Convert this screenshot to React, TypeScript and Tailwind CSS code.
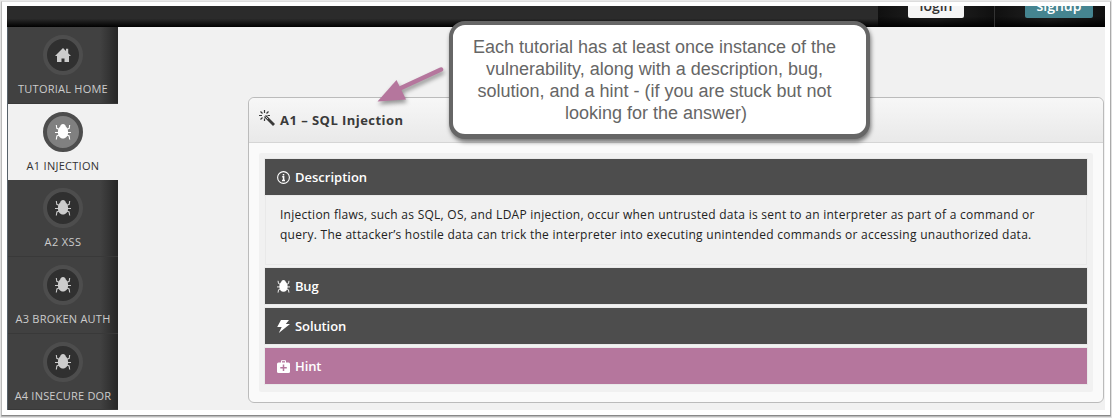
import React from "react";

type IconProps = { className?: string };

function BugIcon({ className }: IconProps) {
  return (
    <svg viewBox="0 0 16 16" className={className} fill="none" stroke="currentColor">
      <path d="M8 0C6.500 0 5.400 1 5.200 2.400 3.800 3.600 2.900 5.700 2.900 8.200c0 3.800 2.200 6.300 5.100 6.300s5.100-2.500 5.100-6.300c0-2.500-.9-4.600-2.300-5.800C10.600 1 9.500 0 8 0z" fill="currentColor" stroke="none" />
      <path strokeWidth="1.100" d="M4.500 5.500 1.800 4.300 1.300 1M11.500 5.500l2.700-1.200.5-3.300M4 8.500H0M12 8.500h4M4.500 10.800 1.900 12 1.300 15.500M11.500 10.800l2.600 1.200.6 3.500" />
    </svg>
  );
}

function HomeIcon({ className }: IconProps) {
  return (
    <svg viewBox="0 0 16 16" className={className} fill="currentColor">
      <path d="M8 1 0 9h2v6h4.500v-3.500h3V15H14V9h2l-2.800-2.800V1.700H11v2.300z" />
    </svg>
  );
}

function WandIcon({ className }: IconProps) {
  return (
    <svg viewBox="0 0 16 16" className={className} fill="none" stroke="currentColor">
      <path strokeWidth="2.800" d="M6 6 15 15" />
      <path strokeWidth="1.200" d="M5.500 0v3M5.500 8.500v2.500M0 5.500h3M8.500 5.500H11M1.500 1.500l2 2M9.500 1.500l-2 2M3.500 7.500l-2 2" />
      <path stroke="#eee" strokeWidth=".8" d="m6.500 6.500 2.500 2.500" />
    </svg>
  );
}

function InfoIcon({ className }: IconProps) {
  return (
    <svg viewBox="0 0 13 13" className={className} fill="none" stroke="currentColor">
      <circle cx="6.500" cy="6.500" r="5.900" strokeWidth="1.100" />
      <path strokeWidth="1.500" d="M6.500 3v1.500M5.200 5.700h1.400v3.800M5 9.500h3" />
    </svg>
  );
}

function BoltIcon({ className }: IconProps) {
  return (
    <svg viewBox="0 0 13 13" className={className} fill="currentColor">
      <path d="M4 0h8L8.800 3.900H13L1.800 13l2.900-6H.2z" />
    </svg>
  );
}

function KitIcon({ className }: IconProps) {
  return (
    <svg viewBox="0 0 13 13" className={className}>
      <path d="M4.500 3V.7h4V3" fill="none" stroke="currentColor" />
      <rect y="2.500" width="13" height="10.500" rx="1.500" fill="currentColor" />
      <path d="M6.500 4.500v6.500M3.300 7.700h6.500" stroke="#b5769d" strokeWidth="1.500" />
    </svg>
  );
}

const tabs = [
  { label: "TUTORIAL HOME", box: "h-[77px]", text: "tracking-[0.24px]", Icon: HomeIcon },
  { label: "A1 INJECTION", box: "h-[76px]", text: "tracking-[0.28px]", Icon: BugIcon, active: true },
  { label: "A2 XSS", box: "h-[77px]", text: "tracking-[0.4px]", Icon: BugIcon },
  { label: "A3 BROKEN AUTH", box: "h-[77px]", text: "tracking-[0.24px]", Icon: BugIcon },
  { label: "A4 INSECURE DOR", box: "h-[76px]", text: "tracking-[0.2px]", Icon: BugIcon },
];

function Sidebar() {
  return (
    <nav className="w-[111px] shrink-0 border-l border-[#56616a]">
      {tabs.map(({ label, box, text, Icon, active }) => (
        <div
          key={label}
          className={`${box} flex flex-col items-center pt-2 ${
            active
              ? "bg-[#f1f1f1] text-[#333]"
              : "border-b border-[#393939] bg-[linear-gradient(90deg,#414141_84%,#272727)] text-[#ccc]"
          }`}
        >
          <span
            className={`flex size-10 shrink-0 items-center justify-center rounded-full border-4 ${
              active ? "border-[#4d4d4d] bg-[#808080] text-white" : "border-[#4d4d4d] bg-[#303030]"
            }`}
          >
            <Icon className="size-4" />
          </span>
          <span className={`mt-[6px] text-[11px] leading-4 font-medium whitespace-nowrap ${text}`}>{label}</span>
        </div>
      ))}
    </nav>
  );
}

function TopBar() {
  return (
    <header className="flex h-[21px] shrink-0 justify-end overflow-hidden bg-[linear-gradient(#2b2b2b_60%,#000)]">
      <div className="flex w-[117px] border-r border-[#333] bg-[linear-gradient(90deg,#101010,#222_50%,#101010)]">
        <div className="flex size-full bg-[linear-gradient(transparent_50%,#000)] pl-[30px]">
          <div className="flex h-3 w-14 items-end justify-center rounded-b-xs bg-[#f5f5f5] text-[14px] leading-4 font-semibold text-[#333]">
            <span className="h-5">login</span>
          </div>
        </div>
      </div>
      <div className="flex w-[110px] bg-[linear-gradient(90deg,#101010,#222_50%,#101010)]">
        <div className="flex size-full bg-[linear-gradient(transparent_50%,#000)] pl-[30px]">
          <div className="flex h-3 w-[68px] items-end justify-center rounded-b-xs bg-[#458490] text-[14px] leading-4 font-semibold text-white">
            <span className="h-5">signup</span>
          </div>
        </div>
      </div>
    </header>
  );
}

type BarProps = { label: string; color: string; text: string; Icon: React.ComponentType<IconProps> };

function Bar({ label, color, text, Icon }: BarProps) {
  return (
    <div className={`flex h-9 items-center pl-3 text-white shadow-[0_0_0_1px_#e9e9e9] ${color}`}>
      <Icon className="mr-[5px] size-[13px]" />
      <span className={`text-[13px] leading-5 font-semibold ${text}`}>{label}</span>
    </div>
  );
}

function Panel() {
  return (
    <section className="h-[306px] w-[856px] rounded-md border border-[#bbb] bg-[#fafafa]">
      <div className="flex h-[45px] items-center rounded-t-md border-b border-[#d5d5d5] bg-linear-to-b from-[#f7f7f7] to-[#e9e9e9] pl-[10px] text-[#3a3a3a]">
        <WandIcon className="mb-[5px] size-4" />
        <h1 className="ml-[5px] text-[13px] leading-5 font-bold tracking-[0.46px]">A1 – SQL Injection</h1>
      </div>
      <div className="mx-[10px] mt-[10px] flex h-[239px] flex-col rounded-xs bg-[#f1f1f1] px-[6px] pt-[6px]">
        <Bar label="Description" color="bg-[#4d4d4d]" text="tracking-[0px]" Icon={InfoIcon} />
        <div className="mb-[3px] h-[70px] border border-[#e9e9e9] pt-[9px] pl-[14px] text-[12px] leading-5 whitespace-nowrap text-[#222]">
          <p className="tracking-[0.265px]">Injection flaws, such as SQL, OS, and LDAP injection, occur when untrusted data is sent to an interpreter as part of a command or</p>
          <p className="tracking-[0.27px]">query. The attacker’s hostile data can trick the interpreter into executing unintended commands or accessing unauthorized data.</p>
        </div>
        <div className="flex flex-col gap-1">
          <Bar label="Bug" color="bg-[#4d4d4d]" text="tracking-[-0.2px]" Icon={BugIcon} />
          <Bar label="Solution" color="bg-[#4d4d4d]" text="tracking-[-0.1px]" Icon={BoltIcon} />
          <Bar label="Hint" color="bg-[#b5769d]" text="tracking-[-0.1px]" Icon={KitIcon} />
        </div>
      </div>
    </section>
  );
}

function Callout() {
  return (
    <>
      <svg viewBox="0 0 80 50" className="absolute top-[62px] left-[370px] h-[50px] w-20 overflow-visible drop-shadow-[1px_3px_2px_rgba(0,0,0,0.4)]">
        <path d="M71 7.500 31 26" stroke="#b5769d" strokeWidth="4.500" strokeLinecap="round" />
        <path d="M7.500 39.500 26.500 18 36 37.500z" fill="#b5769d" />
      </svg>
      <div className="absolute top-[21px] left-[449px] h-[118px] w-[421px] rounded-[16px] border-4 border-b-[5px] border-[#666] bg-white pt-[11px] pr-[10px] text-center font-['Liberation_Sans',sans-serif] text-[18px] leading-[22px] whitespace-nowrap text-[#666] shadow-[1px_3px_4px_rgba(0,0,0,0.5)]">
        <p>Each tutorial has at least once instance of the</p>
        <p>vulnerability, along with a description, bug,</p>
        <p>solution, and a hint - (if you are stuck but not</p>
        <p className="pl-[3px]">looking for the answer)</p>
      </div>
    </>
  );
}

export default function App() {
  return (
    <div className="relative h-[418px] w-[1112px] bg-[#e8e8e8] pt-px pl-px font-['Open_Sans',sans-serif]">
      <div className="flex h-[415px] w-[1110px] flex-col border border-t-[#ddd] border-r-[#aaa] border-b-[#888] border-l-[#bbb] bg-white pt-1 pr-1 pl-[5px] shadow-[0_1px_1px_#bbb]">
        <div className="flex h-[404px] w-[1098px] flex-col overflow-hidden bg-[#f1f1f1]">
          <TopBar />
          <div className="flex min-h-0 flex-1">
            <Sidebar />
            <main className="pt-[70px] pl-[130px]">
              <Panel />
            </main>
          </div>
        </div>
      </div>
      <Callout />
    </div>
  );
}
